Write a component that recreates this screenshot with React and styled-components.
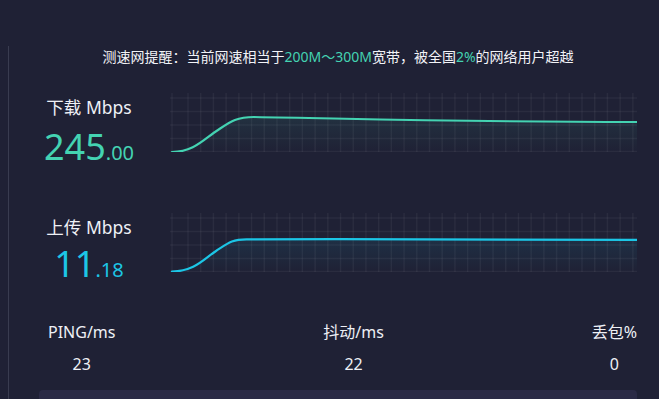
import { styled, createGlobalStyle } from 'styled-components'

const GlobalStyle = createGlobalStyle`
html, body {
    margin: 0;
    padding: 0;
    background: #1f2135;
    overflow: hidden;
}
body {
    font-family: "Noto Sans", "Noto Sans CJK SC", sans-serif;
    color: #eef0f5;
}
`

const TEAL = '#44d3b2'
const CYAN = '#1cc6e6'

const CHART_W = 467
const CHART_H = 59

const gridX = [2, ...Array.from({ length: 36 }, (_, i) => 18 + i * 12.71)]
const gridY = [5, 18.5, 32, 45.5, 58.5]

const Chart = ({ color, d, id }) => {
    const area = `${d} L467 59 L2 59 Z`
    return (
        <ChartSvg width={CHART_W} height={CHART_H} viewBox={`0 0 ${CHART_W} ${CHART_H}`}>
            <defs>
                <linearGradient id={id} x1="0" y1="0" x2="0" y2="1">
                    <stop offset="0" stopColor={color} stopOpacity="0.09" />
                    <stop offset="1" stopColor={color} stopOpacity="0" />
                </linearGradient>
            </defs>
            {gridX.map((x) => (
                <line key={'x' + x} x1={x} y1="0" x2={x} y2={CHART_H} stroke="rgba(255,255,255,0.05)" strokeWidth="1.5" />
            ))}
            {gridY.map((y) => (
                <line key={'y' + y} x1="0" y1={y} x2={CHART_W} y2={y} stroke="rgba(255,255,255,0.05)" strokeWidth="1.5" />
            ))}
            <path d={area} fill={`url(#${id})`} />
            <path d={d} fill="none" stroke={color} strokeWidth="2.2" strokeLinecap="round" />
        </ChartSvg>
    )
}

const SpeedRow = ({ label, whole, frac, color, d, id, top, gap }) => (
    <Row $top={top}>
        <Reading>
            <Label>{label}</Label>
            <Value $color={color} $gap={gap}>
                {whole}<Frac>.{frac}</Frac>
            </Value>
        </Reading>
        <Chart color={color} d={d} id={id} />
    </Row>
)

const App = () => {
    return (
        <Page>
            <GlobalStyle />
            <Main>
                <Notice>
                    测速网提醒：当前网速相当于<Hi>200M～300M</Hi>宽带，被全国<Hi>2%</Hi>的网络用户超越
                </Notice>
                <SpeedRow
                    label="下载 Mbps"
                    whole="245"
                    frac="00"
                    color={TEAL}
                    id="dl"
                    top={26}
                    gap={8}
                    d="M2 59 C 24 59 34 46 48 37 C 60 29 66 24 84 24 C 200 26 300 29 467 29"
                />
                <SpeedRow
                    label="上传 Mbps"
                    whole="11"
                    frac="18"
                    color={CYAN}
                    id="ul"
                    top={40}
                    gap={5}
                    d="M2 58.5 C 24 58.5 34 46 46 38 C 58 30 62 26 78 26.3 C 200 26 300 26.5 467 26.8"
                />
                <Stats>
                    <Stat>
                        <StatLabel>PING/ms</StatLabel>
                        <StatValue>23</StatValue>
                    </Stat>
                    <Stat>
                        <StatLabel>抖动/ms</StatLabel>
                        <StatValue>22</StatValue>
                    </Stat>
                    <Stat>
                        <StatLabel>丢包%</StatLabel>
                        <StatValue>0</StatValue>
                    </Stat>
                </Stats>
                <Card />
            </Main>
        </Page>
    )
}

export default App

const Page = styled.div`
width: 659px;
height: 399px;
padding-left: 8px;
box-sizing: border-box;
display: flex;
`

const Main = styled.div`
flex: 1;
margin-top: 46px;
border-left: 1px solid #393c50;
padding: 0 22px 0 30px;
display: flex;
flex-direction: column;
`

const Notice = styled.div`
padding-top: 1px;
font-size: 14px;
line-height: 20px;
text-align: center;
color: #f2f3f7;
`

const Hi = styled.span`
color: ${TEAL};
`

const Row = styled.div`
display: flex;
align-items: flex-start;
gap: 31px;
margin-top: ${(p) => p.$top}px;
`

const Reading = styled.div`
width: 100px;
display: flex;
flex-direction: column;
align-items: center;
`

const Label = styled.div`
padding-top: 2px;
font-size: 17.5px;
line-height: 24px;
color: #eef0f5;
white-space: nowrap;
`

const Value = styled.div`
margin-top: ${(p) => p.$gap}px;
font-size: 36px;
line-height: 40px;
color: ${(p) => p.$color};
white-space: nowrap;
`

const Frac = styled.span`
font-size: 20px;
`

const ChartSvg = styled.svg`
display: block;
flex-shrink: 0;
`

const Stats = styled.div`
display: flex;
justify-content: space-between;
margin-top: 30px;
padding-left: 9px;
`

const Stat = styled.div`
display: flex;
flex-direction: column;
align-items: center;
`

const StatLabel = styled.div`
font-size: 16px;
line-height: 24px;
color: #eef0f5;
`

const StatValue = styled.div`
margin-top: 8px;
font-size: 16px;
line-height: 24px;
color: #eef0f5;
`

const Card = styled.div`
margin-top: 14px;
height: 40px;
background: #2a2a45;
border-radius: 4px 4px 0 0;
`
